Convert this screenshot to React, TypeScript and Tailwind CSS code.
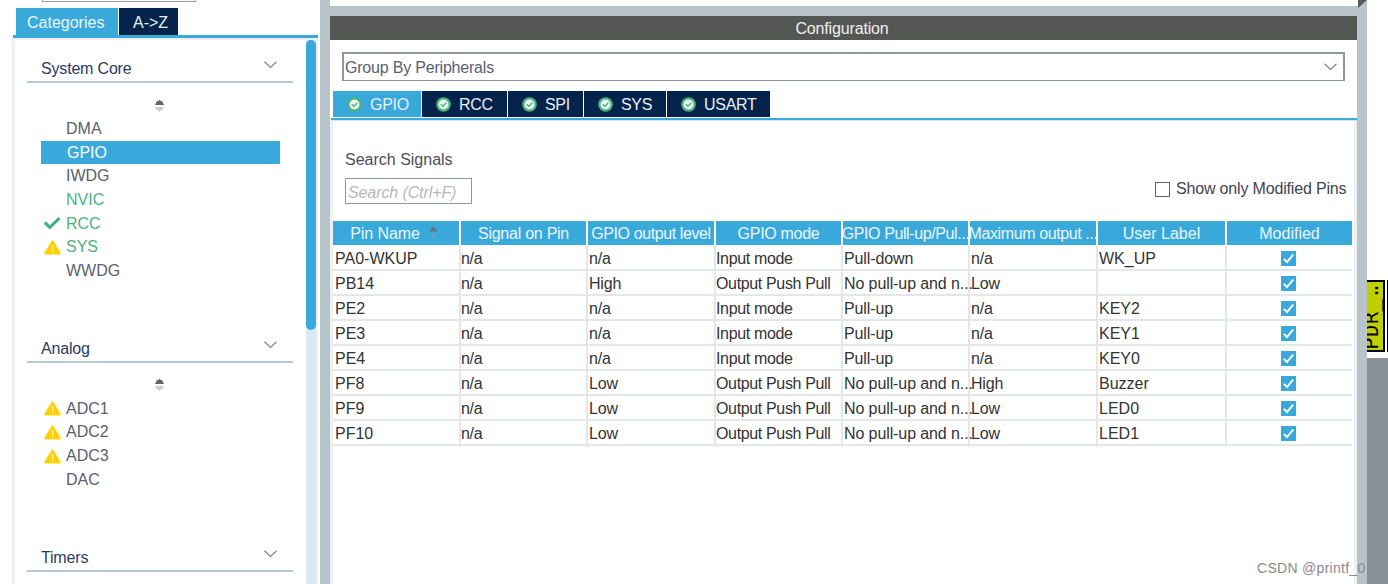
const rows = [
  ["PA0-WKUP", "n/a", "n/a", "Input mode", "Pull-down", "n/a", "WK_UP"],
  ["PB14", "n/a", "High", "Output Push Pull", "No pull-up and n...", "Low", ""],
  ["PE2", "n/a", "n/a", "Input mode", "Pull-up", "n/a", "KEY2"],
  ["PE3", "n/a", "n/a", "Input mode", "Pull-up", "n/a", "KEY1"],
  ["PE4", "n/a", "n/a", "Input mode", "Pull-up", "n/a", "KEY0"],
  ["PF8", "n/a", "Low", "Output Push Pull", "No pull-up and n...", "High", "Buzzer"],
  ["PF9", "n/a", "Low", "Output Push Pull", "No pull-up and n...", "Low", "LED0"],
  ["PF10", "n/a", "Low", "Output Push Pull", "No pull-up and n...", "Low", "LED1"],
];

const headers = ["Pin Name", "Signal on Pin", "GPIO output level", "GPIO mode", "GPIO Pull-up/Pul...", "Maximum output ...", "User Label", "Modified"];

// per column tweaks, the reference text runs a bit narrow in some columns
const cellStyle = [
  "pl-[2px]",
  "tracking-[-0.3px]",
  "pl-[1px] tracking-[-0.2px]",
  "tracking-[-0.35px]",
  "pl-[1px] tracking-[-0.1px]",
  "pl-[1px] tracking-[-0.2px]",
  "pl-[1px]",
];

const headStyle = [
  "pr-[4px] tracking-[-0.1px]",
  "tracking-[-0.25px]",
  "tracking-[-0.4px]",
  "tracking-[-0.3px]",
  "tracking-[-0.4px]",
  "tracking-[-0.4px]",
  "",
  "",
];

const gridCols = "grid grid-cols-[128px_127px_128px_127px_127px_128px_129px_125px]";

function Chevron() {
  return (
    <svg width="13" height="8" viewBox="0 0 13 8" fill="none" stroke="#7d8287" strokeWidth="1.2">
      <path d="M0.5 0.8 L6.5 6.5 L12.5 0.8" />
    </svg>
  );
}

function Warn() {
  return (
    <svg width="17" height="15" viewBox="0 0 17 15">
      <path d="M8.5 0.5 C9.2 0.5 9.6 1 10 1.7 L16.4 12.6 C17 13.8 16.4 14.6 15.2 14.6 L1.8 14.6 C0.6 14.6 0 13.8 0.6 12.6 L7 1.7 C7.4 1 7.8 0.5 8.5 0.5 Z" fill="#ffd100" />
      <rect x="8" y="5" width="1.2" height="5.5" fill="#fff3b0" />
      <rect x="8" y="11.5" width="1.2" height="1.4" fill="#fff3b0" />
    </svg>
  );
}

function GreenCheck() {
  return (
    <svg width="17" height="13" viewBox="0 0 17 13" fill="none">
      <path d="M0.8 5.5 L5.8 10.3 L15.5 1.2" stroke="#49b07a" strokeWidth="3.2" />
    </svg>
  );
}

function StepIcon() {
  return (
    <svg width="11" height="14" viewBox="0 0 11 14">
      <path d="M1 6 L3 2 L4.5 2 L5.5 0.5 L6.5 2 L8 2 L10 6 Z" fill="#62666a" />
      <path d="M1 8 L10 8 L8 11.5 L6.5 11.5 L5.5 13.5 L4.5 11.5 L3 11.5 Z" fill="#c9cdd0" />
    </svg>
  );
}

function TabCheck() {
  return (
    <svg width="15" height="15" viewBox="0 0 15 15" className="shrink-0">
      <circle cx="7.5" cy="7.5" r="7.3" fill="#4cb27e" />
      <circle cx="7.5" cy="7.5" r="5" fill="#eaf6f0" />
      <path d="M4.8 7.2 L6.9 9.3 L10.4 5.8" fill="none" stroke="#4cb27e" strokeWidth="1.4" />
    </svg>
  );
}

function TickBox() {
  return (
    <span className="flex h-[15px] w-[15px] items-center justify-center bg-[#39a9dc]">
      <svg width="15" height="15" viewBox="0 0 15 15" fill="none">
        <path d="M2.8 7.8 L6 11 L12.2 3.6" stroke="#fff" strokeWidth="1.9" />
      </svg>
    </span>
  );
}

function SideItem({ label, tone, icon, active }: { label: string; tone?: string; icon?: React.ReactNode; active?: boolean }) {
  return (
    <div className={`flex h-[23.7px] w-[239px] items-center ${active ? "bg-[#39a9dc] text-white" : tone ?? "text-[#5a6070]"}`}>
      <span className="flex w-[25px] shrink-0 items-center pl-[3px]">{icon}</span>
      <span className={active ? "pl-px" : ""}>{label}</span>
    </div>
  );
}

function SideHead({ label }: { label: string }) {
  return (
    <div className="mx-[12px] flex h-[26px] w-[266px] items-start justify-between border-b-2 border-[#b9c8d6] pl-[14px] pr-[16px] tracking-[-0.18px] text-[#2b3a67]">
      <span className="leading-[24px]">{label}</span>
      <span className="pt-[4px]"><Chevron /></span>
    </div>
  );
}

export default function App() {
  return (
    <div className="relative flex h-[584px] w-[1388px] overflow-hidden bg-white font-['Liberation_Sans',Arial,sans-serif] text-[16px]">
      {/* left categories panel */}
      <div className="w-[320px] shrink-0">
        <div className="ml-[42px] h-[2px] w-[154px] border-x border-b border-[#9a9ea3]" />
        <div className="ml-[16px] mt-[6px] flex h-[27px] gap-px leading-[29px]">
          <div className="w-[102px] bg-[#39a9dc] pl-[11px] text-[#e9f6fc]">Categories</div>
          <div className="w-[59px] bg-[#03234b] pl-[14px] text-[#e9f0f8]">A-&gt;Z</div>
        </div>
        <div className="ml-[13px] h-[3px] w-[305px] bg-[#39a9dc]" />
        <div className="ml-[12px] flex h-[546px] w-[306px] border-x-2 border-t-2 border-l-[3px] border-[#eef1f4]">
          <div className="w-[291px] text-[#5a6070]">
            <div className="pt-[17px]"><SideHead label="System Core" /></div>
            <div className="flex justify-center pr-[3px] pt-[16px]"><StepIcon /></div>
            <div className="ml-[26px] mt-[4px]">
              <SideItem label="DMA" />
              <SideItem label="GPIO" active />
              <SideItem label="IWDG" />
              <SideItem label="NVIC" tone="text-[#4cb27e]" />
              <SideItem label="RCC" tone="text-[#4cb27e]" icon={<GreenCheck />} />
              <SideItem label="SYS" tone="text-[#4cb27e]" icon={<Warn />} />
              <SideItem label="WWDG" />
            </div>
            <div className="pt-[54px]"><SideHead label="Analog" /></div>
            <div className="flex justify-center pr-[3px] pt-[15px]"><StepIcon /></div>
            <div className="ml-[26px] mt-[5px]">
              <SideItem label="ADC1" icon={<Warn />} />
              <SideItem label="ADC2" icon={<Warn />} />
              <SideItem label="ADC3" icon={<Warn />} />
              <SideItem label="DAC" />
            </div>
            <div className="pt-[54px]"><SideHead label="Timers" /></div>
          </div>
          <div className="h-full w-[10px] bg-[#d8e8f5]">
            <div className="h-[290px] w-[10px] rounded-[5px] bg-[#39a9dc]" />
          </div>
        </div>
      </div>

      {/* configuration panel */}
      <div className="w-[1047px] shrink-0 bg-[#b8c4ca] px-[10px]">
        <div className="mb-[10px] h-[6px] w-[1028px] bg-white" />
        <div className="h-[24px] w-[1027px] bg-[#545654] pr-[3px] text-center leading-[26px] tracking-[-0.15px] text-[#f0f0f0]">Configuration</div>
        <div className="flex h-[544px] w-[1027px] flex-col bg-white pt-[12px] text-[#3f4450]">
          <div className="ml-[12px] flex h-[29px] w-[1003px] items-center justify-between border-2 border-b-[1px] border-[#8f969c] pl-[1px] pr-[6px] text-[#5a6070]">
            <span className="pt-[2px] tracking-[-0.2px]">Group By Peripherals</span>
            <Chevron />
          </div>
          <div className="ml-[3px] mt-[10px] flex h-[26px] gap-px tracking-[-0.3px] text-[#e9f0f8]">
            {[
              ["GPIO", "w-[88px]", "bg-[#39a9dc]"],
              ["RCC", "w-[85px]", "bg-[#03234b]"],
              ["SPI", "w-[75px]", "bg-[#03234b]"],
              ["SYS", "w-[82px]", "bg-[#03234b]"],
              ["USART", "w-[103px]", "bg-[#03234b]"],
            ].map(([name, w, bg]) => (
              <div key={name} className={`flex items-center gap-[8px] pl-[14px] ${w} ${bg}`}>
                <TabCheck />
                <span className="pt-[1px]">{name}</span>
              </div>
            ))}
          </div>
          <div className="ml-px mt-[1px] h-[3px] w-[1026px] shrink-0 border-t-2 border-b border-t-[#39a9dc] border-b-[#d0e8f5]" />
          <div className="flex-1 border-x-[3px] border-[#eef1f4]">
            <div className="relative h-[100px]">
              <div className="pl-[12px] pt-[30px] leading-[18px] text-[#4a4f5a]">Search Signals</div>
              <div className="ml-[12px] mt-[9px] h-[26px] w-[127px] border border-[#8f969c] pl-[2px] italic leading-[27px] tracking-[-0.1px] text-[#b4b8bc]">Search (Ctrl+F)</div>
              <div className="absolute left-[822px] top-[56px] flex items-center gap-[6px] tracking-[-0.17px] text-[#3f4450]">
                <span className="h-[15px] w-[15px] border border-[#5f6368]" />
                <span>Show only Modified Pins</span>
              </div>
            </div>
            <div className="w-[1019px] text-[#333]">
              <div className={`${gridCols} h-[25px]`}>
                {headers.map((h, i) => (
                  <div key={h} className={`flex h-[24px] items-center justify-center whitespace-nowrap bg-[#39a9dc] pt-[2px] text-[#eaf6fc] ${headStyle[i]} ${i < 7 ? "mr-[2px]" : ""}`}>
                    <span>{h}</span>
                    {i === 0 && (
                      <svg width="9" height="13" viewBox="0 0 9 13" className="ml-[9px] -mt-[3px]">
                        <path d="M4.5 0 L9 5.5 L0 5.5 Z" fill="#5d7483" />
                        <path d="M0 7.5 L9 7.5 L4.5 13 Z" fill="#5aa4cc" />
                      </svg>
                    )}
                  </div>
                ))}
              </div>
              {rows.map((r) => (
                <div key={r[0]} className={`${gridCols} h-[25px] border-b-2 border-[#e4e7ea]`}>
                  {r.map((c, i) => (
                    <div key={i} className={`whitespace-nowrap border-r-2 border-[#e4e7ea] leading-[26px] ${cellStyle[i]}`}>{c}</div>
                  ))}
                  <div className="flex items-center justify-center pb-[2px] pr-[2px]">
                    <TickBox />
                  </div>
                </div>
              ))}
            </div>
          </div>
        </div>
      </div>

      {/* sliver of the pinout view */}
      <div className="w-[21px] shrink-0">
        <div className="flex h-[358px] items-start bg-white pt-[280px]">
          <div className="flex h-[72px] w-[18px] items-end overflow-hidden border-y-2 border-r-2 border-black bg-[#bfcf00]">
            <span className="-ml-[6px] rotate-180 whitespace-nowrap font-['DejaVu_Sans_Mono',monospace] text-[20px] leading-[20px] text-black [writing-mode:vertical-rl]">
              <span className="tracking-[0.8px]">PDR</span>_<span className="tracking-[-7px]">..</span>
            </span>
          </div>
          <div className="ml-[2px] h-[72px] w-[1px] bg-black" />
        </div>
        <div className="h-[226px] bg-[#8a9299]" />
      </div>

      <div className="absolute left-[1257px] top-[558px] text-[14px] tracking-[0.3px] text-[#8a8a8a]">CSDN @printf_01</div>
      <svg width="9" height="8" viewBox="0 0 9 8" className="absolute left-[1358px] top-0">
        <path d="M0 0 H9 L0 8 Z" fill="#5a5d60" />
      </svg>
    </div>
  );
}
